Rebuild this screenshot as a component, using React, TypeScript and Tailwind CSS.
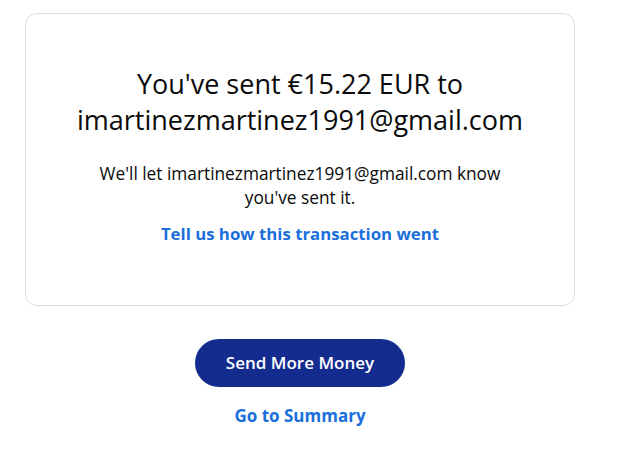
export default function App() {
  return (
    <div className="min-h-[463px] w-[627px] bg-white font-['Open_Sans','Noto_Sans',sans-serif]">
      <div className="flex w-[600px] flex-col items-center pt-[13px]">
        <div className="flex h-[293px] w-[550px] flex-col items-center rounded-xl border border-[#dcdcdc] pt-[52px] text-center">
          <h1 className="text-[27px] leading-[36px] font-normal text-[#0a0a0a]">
            You've sent €15.22 EUR to
            <br />
            imartinezmartinez1991@gmail.com
          </h1>
          <p className="mt-[24px] text-[17.3px] leading-[24px] text-[#0a0a0a]">
            We'll let imartinezmartinez1991@gmail.com know
            <br />
            you've sent it.
          </p>
          <a className="mt-[12px] text-[16.8px] leading-[24px] font-bold text-[#1a6fdb]">
            Tell us how this transaction went
          </a>
        </div>
        <button className="mt-[33px] h-[48px] w-[210px] rounded-full bg-[#142c8e] text-[17px] font-semibold text-white">
          Send More Money
        </button>
        <a className="mt-[18px] text-[17px] leading-[22px] font-bold text-[#1a6fdb]">Go to Summary</a>
      </div>
    </div>
  );
}
